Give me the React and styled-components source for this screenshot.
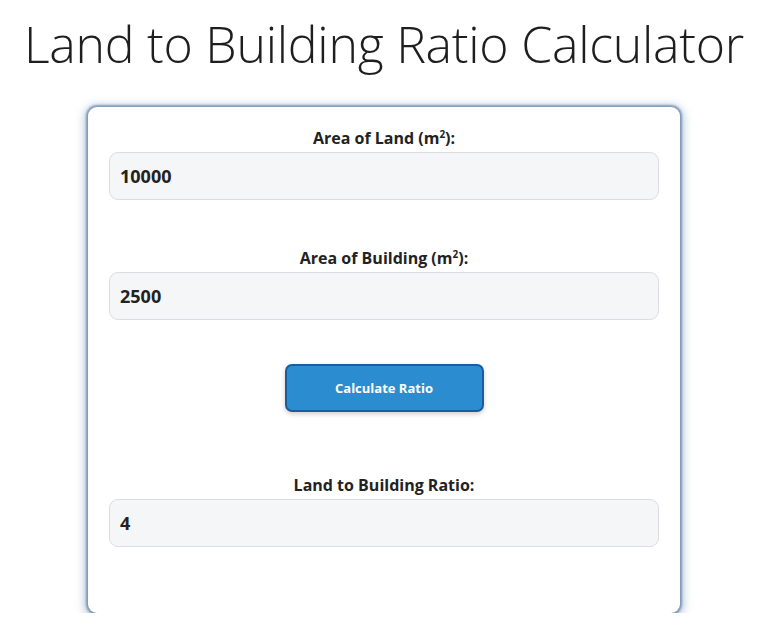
import React from 'react';
import styled, { createGlobalStyle } from 'styled-components';

const GlobalStyle = createGlobalStyle`
  body {
    margin: 0;
    background: #ffffff;
    font-family: 'Open Sans', 'Noto Sans', sans-serif;
    color: #222;
  }
`;

const Page = styled.main`
  display: flex;
  flex-direction: column;
  align-items: center;
  padding-top: 15px;
`;

const Title = styled.h1`
  margin: 0 0 34px;
  font-size: 50px;
  line-height: 58px;
  font-weight: 300;
  color: #1e1e1e;
  letter-spacing: -0.25px;
`;

const Card = styled.section`
  width: 592px;
  box-sizing: border-box;
  padding: 21px 21px 66px;
  background: #fff;
  border-radius: 9px;
  box-shadow: 0 0 2px 2px rgba(95, 128, 170, 0.7), 0 2px 10px 3px rgba(95, 128, 170, 0.5);
  display: flex;
  flex-direction: column;
`;

const Field = styled.div`
  display: flex;
  flex-direction: column;
  margin-top: ${p => p.gap || 0}px;
`;

const Label = styled.label`
  text-align: center;
  font-size: 16px;
  line-height: 21px;
  font-weight: 700;
  color: #222;
  margin-bottom: 3px;

  sup {
    font-size: 10px;
    line-height: 0;
  }
`;

const Input = styled.input`
  box-sizing: border-box;
  height: 48px;
  width: 100%;
  padding: 0 10px;
  border: 1px solid #dcdde0;
  border-radius: 9px;
  background: #f5f6f8;
  font-family: inherit;
  font-size: 18px;
  font-weight: 700;
  color: #222;
  outline: none;
`;

const Button = styled.button`
  align-self: center;
  margin-top: 44px;
  width: 199px;
  height: 48px;
  border: 2px solid #1b5d9c;
  border-radius: 7px;
  background: #2b8dd0;
  color: #fff;
  font-family: inherit;
  font-size: 13px;
  font-weight: 700;
  box-shadow: 0 2px 5px rgba(0, 0, 0, 0.2);
  cursor: pointer;
`;

export default function App() {
  return (
    <>
      <GlobalStyle />
      <Page>
        <Title>Land to Building Ratio Calculator</Title>
        <Card>
          <Field>
            <Label>Area of Land (m<sup>2</sup>):</Label>
            <Input defaultValue="10000" />
          </Field>
          <Field gap={48}>
            <Label>Area of Building (m<sup>2</sup>):</Label>
            <Input defaultValue="2500" />
          </Field>
          <Button>Calculate Ratio</Button>
          <Field gap={63}>
            <Label>Land to Building Ratio:</Label>
            <Input defaultValue="4" readOnly />
          </Field>
        </Card>
      </Page>
    </>
  );
}
